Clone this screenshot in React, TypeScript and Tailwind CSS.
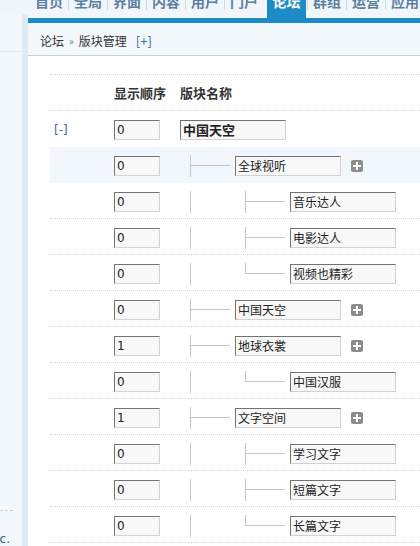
import React from "react";

const CN = { fontFamily: '"Noto Sans CJK SC", sans-serif' };
const NUM = { fontFamily: '"DejaVu Sans", "Noto Sans CJK SC", sans-serif' };

type RowData = {
  level: 0 | 1 | 2;
  order: string;
  name: string;
  last?: boolean;
  plus?: boolean;
  hl?: boolean;
  noBorder?: boolean;
};

const rows: RowData[] = [
  { level: 0, order: "0", name: "中国天空", noBorder: true },
  { level: 1, order: "0", name: "全球视听", plus: true, hl: true, noBorder: true },
  { level: 2, order: "0", name: "音乐达人" },
  { level: 2, order: "0", name: "电影达人" },
  { level: 2, order: "0", name: "视频也精彩", last: true },
  { level: 1, order: "0", name: "中国天空", plus: true },
  { level: 1, order: "1", name: "地球衣裳", plus: true },
  { level: 2, order: "0", name: "中国汉服", last: true },
  { level: 1, order: "1", name: "文字空间", plus: true },
  { level: 2, order: "0", name: "学习文字" },
  { level: 2, order: "0", name: "短篇文字" },
  { level: 2, order: "0", name: "长篇文字", last: true },
];

const inputCls =
  "h-[20px] border border-t-[#737373] border-l-[#737373] border-r-[#d2d2d2] border-b-[#d2d2d2] bg-[#f8f8f8] px-[2px] text-[#222] outline-none";

function PlusIcon() {
  return (
    <svg width="12" height="12" viewBox="0 0 12 12" className="ml-[10px] shrink-0">
      <rect x="0" y="0" width="12" height="12" rx="2" fill="#8d8d8d" />
      <rect x="5" y="2" width="2" height="8" fill="#fff" />
      <rect x="2" y="5" width="8" height="2" fill="#fff" />
    </svg>
  );
}

function L1Line() {
  return (
    <svg width="45" height="22" className="shrink-0">
      <line x1="0.5" y1="0" x2="0.5" y2="22" stroke="#c6c6c6" strokeWidth="1" />
      <line x1="0" y1="10.5" x2="40" y2="10.5" stroke="#c6c6c6" strokeWidth="1" />
    </svg>
  );
}

function L2Line({ last }: { last?: boolean }) {
  return (
    <svg width="100" height="22" className="shrink-0">
      <line x1="0.5" y1="0" x2="0.5" y2="22" stroke="#c6c6c6" strokeWidth="1" />
      <line x1="55.5" y1="0" x2="55.5" y2={last ? 11 : 22} stroke="#c6c6c6" strokeWidth="1" />
      <line x1="55" y1="10.5" x2="95" y2="10.5" stroke="#c6c6c6" strokeWidth="1" />
    </svg>
  );
}

function Row({ r }: { r: RowData }) {
  return (
    <div
      className={
        "flex h-[36px] items-center pt-[2px] " +
        (r.noBorder ? "border-b border-transparent " : "border-b border-dotted border-[#d6d6d6] ") +
        (r.hl ? "bg-[#f1f7fc]" : "")
      }
    >
      <div className="w-[64px] pl-[4px] text-[12px] leading-[16px] text-[#3b6aa0]" style={NUM}>
        {r.level === 0 ? "[-]" : ""}
      </div>
      <div className="flex w-[66px] shrink-0">
        <input readOnly value={r.order} className={inputCls + " w-[46px] text-[12px]"} style={NUM} />
      </div>
      <div className={"flex items-center " + (r.level === 0 ? "" : "pl-[10px]")}>
        {r.level === 1 && <L1Line />}
        {r.level === 2 && <L2Line last={r.last} />}
        <input
          readOnly
          value={r.name}
          className={
            inputCls +
            " w-[106px] shrink-0 " +
            (r.level === 0 ? "text-[13px] font-bold" : "text-[12px]")
          }
          style={CN}
        />
        {r.plus && <PlusIcon />}
      </div>
    </div>
  );
}

const tabs = ["首页", "全局", "界面", "内容", "用户", "门户", "论坛", "群组", "运营", "应用"];

export default function App() {
  return (
    <div className="flex h-[546px] w-[420px] overflow-hidden bg-white" style={CN}>
      {/* sidebar */}
      <div className="flex w-[28px] shrink-0 flex-col">
        <div className="h-[18px] bg-[#f1f6fa]" />
        <div className="flex flex-1">
          <div className="flex w-[22px] flex-col bg-[#f3f8fc]">
            <div className="h-[38px] border-b border-[#e2e9ef]" />
            <div className="h-[458px]" />
            <div className="w-[13px] border-t border-dashed border-[#cdd3d8]" />
            <div className="h-[21px]" />
            <div className="flex justify-end overflow-hidden whitespace-nowrap pr-[12px] text-[12px] leading-[14px] text-[#2f5f9a]" style={NUM}>
              Comsenz Inc.
            </div>
          </div>
          <div className="w-[6px] bg-[#dcebf6]" />
        </div>
      </div>

      {/* main */}
      <div className="flex min-w-0 flex-1 flex-col">
        <div className="flex h-[18px] items-start overflow-hidden bg-[#f1f6fa] pl-[2px] text-[14px] font-bold leading-[14px]">
          {tabs.map((t, i) => {
            const active = t === "论坛";
            return (
              <React.Fragment key={t}>
                {active ? (
                  <div className="ml-[4px] mr-[1px] h-[18px] w-[39px] shrink-0 bg-[#1d8bc4] text-center">
                    <div className="-mt-[6px] text-white">{t}</div>
                  </div>
                ) : (
                  <div className="h-[18px] w-[38px] shrink-0 text-center">
                    <div className="-mt-[6px] text-[#5a7fa3]">{t}</div>
                  </div>
                )}
                {i < tabs.length - 1 && t !== "门户" && !active && (
                  <div className="h-[10px] w-[1px] shrink-0 bg-[#c9dbea]" />
                )}
                {active && <div className="h-[10px] w-[1px] shrink-0 bg-[#c9dbea]" />}
              </React.Fragment>
            );
          })}
        </div>
        <div className="h-[5px] bg-[#1d8bc4]" />
        <div className="flex h-[33px] items-center border-b border-[#c8d0d7] bg-[#f3f8fc] pl-[12px] pt-[3px] text-[12px] text-[#333]">
          <span>论坛</span>
          <span className="mx-[5px] text-[10px] text-[#777]">»</span>
          <span>版块管理</span>
          <span className="ml-[9px] text-[13px] text-[#3a6fae]">[+]</span>
        </div>
        <div className="flex-1 bg-white pl-[22px] pt-[18px]">
          <div className="w-[420px] border-t border-dotted border-[#d6d6d6]">
            <div className="flex h-[36px] items-center border-b border-dotted border-[#d6d6d6] pt-[1px] text-[13px] font-bold text-[#333]">
              <div className="w-[64px]" />
              <div className="w-[66px]">显示顺序</div>
              <div>版块名称</div>
            </div>
            {rows.map((r, i) => (
              <Row key={i} r={r} />
            ))}
          </div>
        </div>
      </div>
    </div>
  );
}
